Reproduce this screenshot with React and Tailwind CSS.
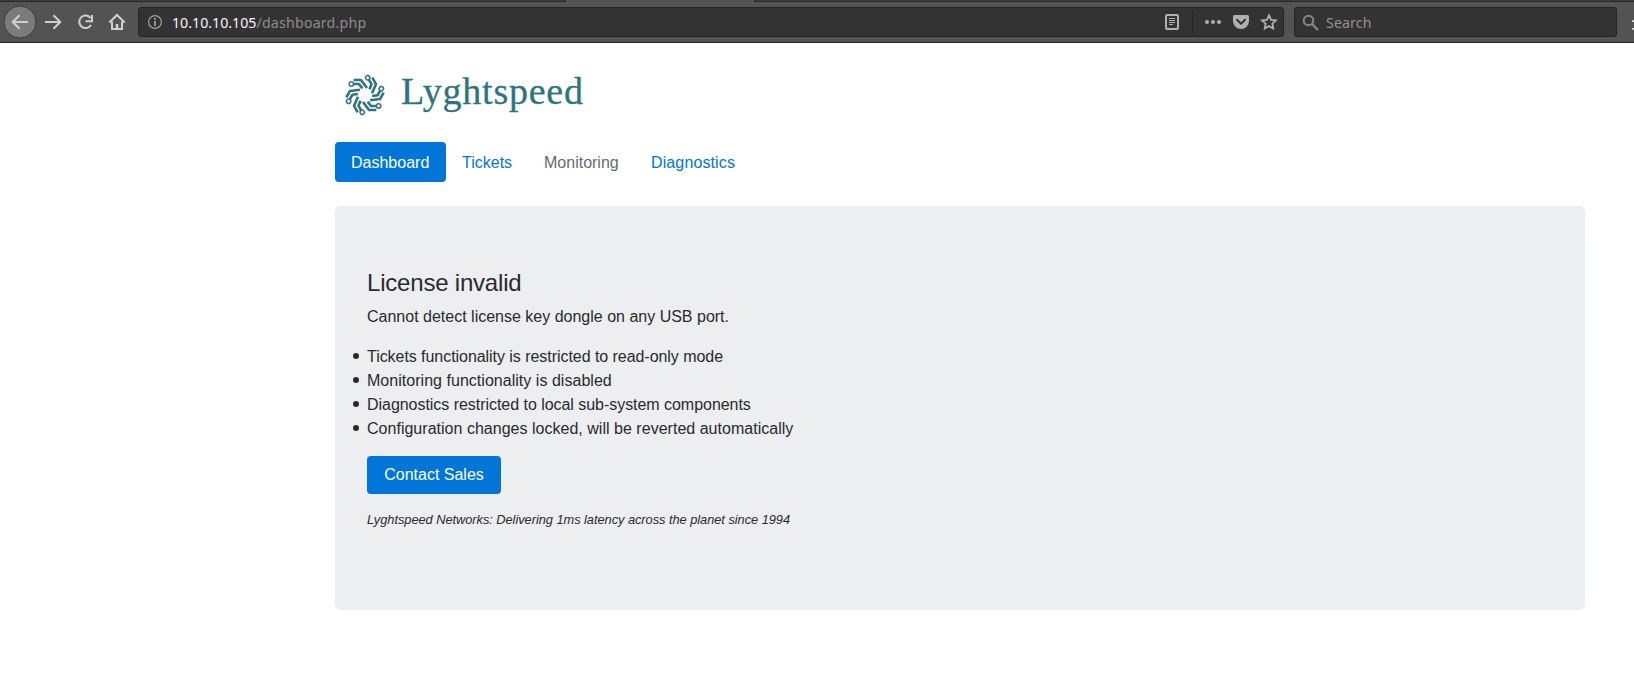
const font = "font-['Liberation_Sans',Arial,sans-serif]";

function BrandMark() {
  return (
    <svg width="42" height="42" viewBox="-63 -63 126 126" className="mt-px shrink-0" fill="none" stroke="#2f747c" strokeWidth="7.8" strokeLinejoin="round">
      {[0, 60, 120, 180, 240, 300].map((a) => (
        <g key={a} transform={`rotate(${a})`}>
          <path d="M-34 -45H-12L6 -21" />
          <path d="M-35 -33H-18L-8 -20" />
          <circle cx="-41" cy="-33" r="6.5" strokeWidth="4.5" fill="#fff" />
        </g>
      ))}
    </svg>
  );
}

function Toolbar() {
  return (
    <header className="flex h-[43px] flex-col border-b border-[#242424] bg-[#535353] font-['Noto_Sans',sans-serif] text-[14.2px]">
      <div className="flex h-[2px] justify-between">
        <div className="w-[566px] border-b border-r border-[#282828] bg-[#3d3d3d]" />
        <div className="w-[880px] border-b border-l border-[#282828] bg-[#3d3d3d]" />
      </div>
      <div className="flex h-10 items-center overflow-hidden pl-1 text-[#d0d0d0]">
        <svg width="130" height="40" viewBox="4 2 130 40" className="shrink-0" fill="none" stroke="currentColor" strokeWidth="2">
          <circle cx="20" cy="22" r="16" fill="#7b7b7b" stroke="#3c3c3c" strokeWidth="1" />
          <path d="M28 22H13M19.5 15.2L12.7 22l6.800 6.800" strokeLinejoin="round" />
          <path d="M45 22h15M53.500 15.200L60.300 22l-6.800 6.800" strokeLinejoin="round" />
          <path d="M90.800 18.200A6.300 6.300 0 1 0 91 25" />
          <path d="M92 15v6.300h-6.500" />
          <path d="M109.300 22.500L117 15l7.700 7.500" />
          <path d="M112 21.500V29h10v-7.500" />
          <path d="M117 29v-5" strokeWidth="2.600" />
        </svg>
        <div className="ml-1 flex h-[30px] w-[1146px] shrink-0 items-center rounded-[3px] border border-[#252525] bg-[#333333]">
          <svg width="14" height="14" viewBox="0 0 14 14" className="ml-[9px] shrink-0" fill="none" stroke="#a0a0a0">
            <circle cx="7" cy="7" r="6.400" strokeWidth="1.200" />
            <path d="M7 6v5M7 3v1.700" strokeWidth="1.800" />
          </svg>
          <div className="ml-[10px] flex-1 whitespace-nowrap pt-[2px] tracking-[0.2px] text-[#8c8c8c]"><span className="tracking-normal text-[#f5f5f5]">10.10.10.105</span>/dashboard.php</div>
          <svg width="120" height="28" viewBox="1163 8 120 28" className="shrink-0" fill="none" stroke="#b0b0b0">
            <rect x="1166" y="15" width="12" height="14" rx="1" strokeWidth="2" />
            <path d="M1169 18.500h6M1169 20.500h6M1169 22.500h6M1169 24.500h4" />
            <path d="M1192.500 11v22" stroke="#242424" />
            <g fill="#b0b0b0" stroke="none">
              <circle cx="1207" cy="22" r="2" />
              <circle cx="1213" cy="22" r="2" />
              <circle cx="1219" cy="22" r="2" />
              <path d="M1234.500 15h13a1.500 1.500 0 0 1 1.500 1.500V21a8 8 0 0 1-16 0v-4.500a1.500 1.500 0 0 1 1.500-1.500z" />
            </g>
            <path d="M1237 19.700l4 4 4-4" stroke="#333" strokeWidth="2" strokeLinecap="round" strokeLinejoin="round" />
            <path d="M1269 15.400l2.100 4.400 4.800.600-3.500 3.300.900 4.800-4.300-2.400-4.300 2.400.900-4.800-3.500-3.300 4.800-.600z" strokeWidth="1.800" />
          </svg>
        </div>
        <div className="ml-[10px] flex h-[30px] w-[323px] shrink-0 items-center rounded-[3px] border border-[#252525] bg-[#333333] text-[#929292]">
          <svg width="17" height="17" viewBox="0 0 17 17" className="ml-[7px]" fill="none" stroke="#888888" strokeWidth="2">
            <circle cx="6.500" cy="6.500" r="4.800" />
            <path d="M10 10l6 6" strokeWidth="2.200" />
          </svg>
          <span className="ml-[7px] pt-[2px] tracking-[0.1px]">Search</span>
        </div>
        <svg width="2" height="12" viewBox="0 0 2 12" className="ml-[15px] mt-[5px] shrink-0" fill="#d0d0d0">
          <path d="M0 1h1l1 1v1H0zM0 9h2v1l-1 1H0z" />
        </svg>
      </div>
    </header>
  );
}

function Item({ children, className = "" }) {
  return (
    <li className={`flex items-center ${className}`}>
      <span className="ml-[-14px] mr-2 size-[6px] rounded-full bg-[#292b2c]" />
      <span className="pt-px">{children}</span>
    </li>
  );
}

export default function App() {
  return (
    <div className={`h-[681px] overflow-hidden bg-white text-base text-[#292b2c] ${font}`}>
      <Toolbar />
      <main className="ml-[335px] w-[1250px]">
        <div className="flex h-[99px] items-center pl-[9px] pt-[3px]">
          <BrandMark />
          <span className="ml-[15px] mt-[-6px] whitespace-nowrap font-['Liberation_Serif',serif] text-[38px] leading-[44px] tracking-[0.75px] text-[#2f747c] [-webkit-text-stroke:0.3px_#2f747c]">Lyghtspeed</span>
        </div>
        <nav className="flex leading-6 text-[#0275d8]">
          <a className="w-[111px] rounded bg-[#0275d8] px-4 pb-[7px] pt-[9px] text-white">Dashboard</a>
          <a className="w-[82px] px-4 pb-[7px] pt-[9px]">Tickets</a>
          <a className="w-[107px] px-4 pb-[7px] pt-[9px] text-[#636c72]">Monitoring</a>
          <a className="px-4 pb-[7px] pt-[9px] tracking-[0.12px]">Diagnostics</a>
        </nav>
        <section className="mt-6 h-[404px] rounded-[4.8px] bg-[#eceeef] px-8 py-16">
          <h1 className="mb-2 text-2xl leading-[26px] tracking-[-0.2px]">License invalid</h1>
          <p className="mb-4 pt-px leading-[23px]">Cannot detect license key dongle on any USB port.</p>
          <ul className="mb-4 leading-[23px]">
            <Item className="h-6 tracking-[-0.05px]">Tickets functionality is restricted to read-only mode</Item>
            <Item className="h-6 tracking-[0.03px]">Monitoring functionality is disabled</Item>
            <Item className="h-6 tracking-[-0.04px]">Diagnostics restricted to local sub-system components</Item>
            <Item className="h-6 tracking-[0.02px]">Configuration changes locked, will be reverted automatically</Item>
          </ul>
          <button className="block h-[38px] w-[134px] rounded bg-[#0275d8] leading-5 text-white">Contact Sales</button>
          <p className="mt-[14px] text-[12.8px] italic leading-6 tracking-[-0.03px]">Lyghtspeed Networks: Delivering 1ms latency across the planet since 1994</p>
        </section>
      </main>
    </div>
  );
}
